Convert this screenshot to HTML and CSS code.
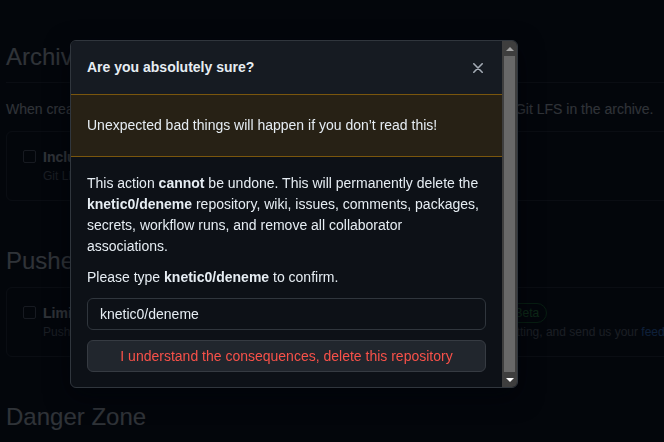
FILE: index.html
```html
<!DOCTYPE html>
<html lang="en">
<head>
<meta charset="utf-8">
<title>Settings</title>
<link rel="stylesheet" href="styles.css">
</head>
<body>
<div class="page">
  <h2 class="subhead subhead-bordered">Archives</h2>
  <p class="lead">When creating source code archives, you can choose to include files stored using Git LFS in the archive.</p>
  <div class="box">
    <div class="option">
      <span class="checkbox"></span>
      <div class="option-text">
        <div class="option-title">Include Git LFS objects in archives</div>
        <div class="note">Git LFS usage in archives is billed at the same rate as usage with the client.</div>
      </div>
    </div>
  </div>

  <h2 class="subhead section">Pushes</h2>
  <div class="box">
    <div class="option">
      <span class="checkbox"></span>
      <div class="option-text">
        <div class="option-title">Limit how many branches and tags can be updated in a single push <span class="label">Beta</span></div>
        <div class="note">Pushes will be rejected if they attempt to update more than this. Learn more about this setting, and send us your <span class="link">feedback</span>.</div>
      </div>
    </div>
  </div>

  <h2 class="subhead section">Danger Zone</h2>
</div>

<div class="overlay"></div>

<div class="dialog">
  <div class="dialog-content">
    <div class="dialog-header">
      <h3 class="dialog-title">Are you absolutely sure?</h3>
      <span class="close" aria-label="Close">
        <svg width="10" height="10" viewBox="0 0 10 10"><path d="M0.8 0.8 L9.2 9.2 M9.2 0.8 L0.8 9.2" stroke="#a3abb4" stroke-width="1.6" stroke-linecap="round" fill="none"/></svg>
      </span>
    </div>
    <div class="flash">Unexpected bad things will happen if you don’t read this!</div>
    <div class="dialog-body">
      <p class="para">This action <strong>cannot</strong> be undone. This will permanently delete the <strong>knetic0/deneme</strong> repository, wiki, issues, comments, packages, secrets, workflow runs, and remove all collaborator associations.</p>
      <p class="para">Please type <strong>knetic0/deneme</strong> to confirm.</p>
      <div class="input">knetic0/deneme</div>
      <div class="danger-btn">I understand the consequences, delete this repository</div>
    </div>
  </div>
  <div class="scrollbar">
    <div class="sb-button"><span class="arrow-up"></span></div>
    <div class="sb-track"><div class="sb-thumb"></div></div>
    <div class="sb-button"><span class="arrow-down"></span></div>
  </div>
</div>
</body>
</html>
```

FILE: styles.css
```css
html, body {
  margin: 0;
  padding: 0;
}
body {
  background: #0d1117;
  color: #e6edf3;
  font-family: "Liberation Sans", Arial, sans-serif;
  font-size: 14px;
  line-height: 21px;
  overflow: hidden;
  width: 664px;
  height: 442px;
}
.page {
  padding: 39px 0 0 6px;
  width: 720px;
}
.subhead {
  margin: 0;
  font-size: 24px;
  font-weight: 400;
  line-height: 36px;
  padding-bottom: 8px;
}
.subhead-bordered {
  padding-bottom: 7px;
  border-bottom: 1px solid #30363d;
}
.section {
  margin-top: 42px;
}
.lead {
  margin: 16px 0 11px;
  white-space: nowrap;
}
.box {
  border: 1px solid #30363d;
  border-radius: 6px;
  padding: 15px 16px;
}
.option {
  display: flex;
  gap: 7px;
}
.checkbox {
  flex: none;
  width: 11px;
  height: 11px;
  margin-top: 3px;
  border: 1px solid #6e7681;
  border-radius: 2px;
  background: #0d1117;
}
.option-title {
  font-weight: 700;
  line-height: 20px;
  white-space: nowrap;
}
.note {
  font-size: 12px;
  line-height: 18px;
  color: #7d8590;
  white-space: nowrap;
}
.label {
  display: inline-block;
  margin-left: 10px;
  padding: 0 7px;
  font-size: 12px;
  font-weight: 500;
  line-height: 18px;
  color: #3fb950;
  border: 1px solid #238636;
  border-radius: 2em;
  vertical-align: 1px;
}
.link {
  color: #4493f8;
}

.overlay {
  position: fixed;
  inset: 0;
  background: rgba(1, 4, 9, 0.8);
}

.dialog {
  position: fixed;
  left: 70px;
  top: 40px;
  width: 446px;
  height: 346px;
  border: 1px solid #30363d;
  border-radius: 6px;
  background: #0d1117;
  display: flex;
  overflow: hidden;
  box-shadow: 0 8px 24px rgba(1, 4, 9, 0.6);
}
.dialog-content {
  flex: 1;
  min-width: 0;
  overflow: hidden;
}
.dialog-header {
  display: flex;
  align-items: center;
  justify-content: space-between;
  padding: 16px 19px 16px 16px;
  background: #161b22;
}
.dialog-title {
  margin: 0;
  font-size: 14px;
  font-weight: 700;
  line-height: 21px;
}
.close {
  display: flex;
  width: 10px;
  height: 10px;
}
.flash {
  padding: 20px 16px;
  background: #272115;
  border-top: 1px solid #7a560d;
  border-bottom: 1px solid #7a560d;
}
.dialog-body {
  padding: 16px;
}
.para {
  margin: 0 0 10px;
}
.input {
  height: 30px;
  line-height: 30px;
  padding: 0 12px;
  border: 1px solid #30363d;
  border-radius: 6px;
  background: #0d1117;
  margin-bottom: 10px;
}
.danger-btn {
  height: 30px;
  line-height: 30px;
  text-align: center;
  color: #f85149;
  background: #21262d;
  border: 1px solid #363b42;
  border-radius: 6px;
}

.scrollbar {
  flex: none;
  width: 15px;
  display: flex;
  flex-direction: column;
  background: #3e3e3e;
}
.sb-button {
  flex: none;
  height: 15px;
  display: flex;
  align-items: center;
  justify-content: center;
}
.arrow-up {
  width: 0;
  height: 0;
  border-left: 4px solid transparent;
  border-right: 4px solid transparent;
  border-bottom: 4px solid #a3a3a3;
}
.arrow-down {
  width: 0;
  height: 0;
  border-left: 4px solid transparent;
  border-right: 4px solid transparent;
  border-top: 4px solid #ffffff;
}
.sb-track {
  flex: 1;
  padding: 0 2px;
}
.sb-thumb {
  height: 100%;
  background: #686868;
}
```
